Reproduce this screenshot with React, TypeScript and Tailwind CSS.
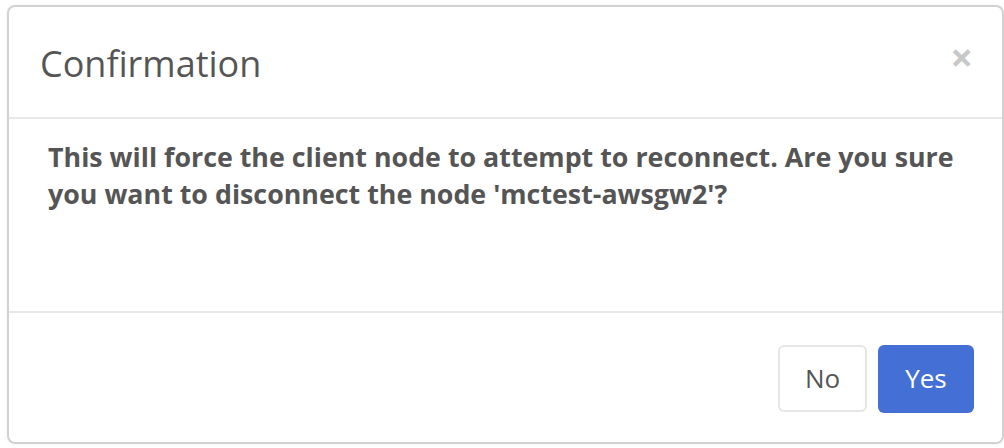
import React from "react";

export default function App() {
  return (
    <div
      className="w-[1004px] h-[448px] bg-white pl-[7px] pt-[5px] overflow-hidden"
      style={{ fontFamily: '"Open Sans", "Noto Sans", sans-serif' }}
    >
      <div className="w-[997px] h-[439px] border-2 border-[#d2d2d2] rounded-[8px] bg-white flex flex-col shadow-[0_0_4px_rgba(0,0,0,0.06)]">
        <div className="h-[112px] flex items-center justify-between pl-[31px] pr-[29px] pt-[3px] border-b-2 border-[#e8e8e8] shrink-0">
          <h1 className="text-[36px] leading-none text-[#555555] font-normal">Confirmation</h1>
          <span className="text-[#c8c8c8] text-[40px] font-bold leading-none -mt-[13px]">×</span>
        </div>
        <div className="h-[194px] pl-[39px] pr-[20px] pt-[19px] shrink-0 border-b-2 border-[#e8e8e8]">
          <p className="text-[26.8px] leading-[37px] font-bold text-[#555555]">
            This will force the client node to attempt to reconnect. Are you sure you want to disconnect the node 'mctest-awsgw2'?
          </p>
        </div>
        <div className="flex-1 flex items-center justify-end gap-[11px] pr-[28px] pt-[2px]">
          <button className="w-[89px] h-[67px] border-2 border-[#e6e6e6] rounded-[6px] bg-white text-[26px] text-[#555555]">
            No
          </button>
          <button className="w-[96px] h-[68px] rounded-[6px] bg-[#4470d6] text-[26px] text-white">
            Yes
          </button>
        </div>
      </div>
    </div>
  );
}
